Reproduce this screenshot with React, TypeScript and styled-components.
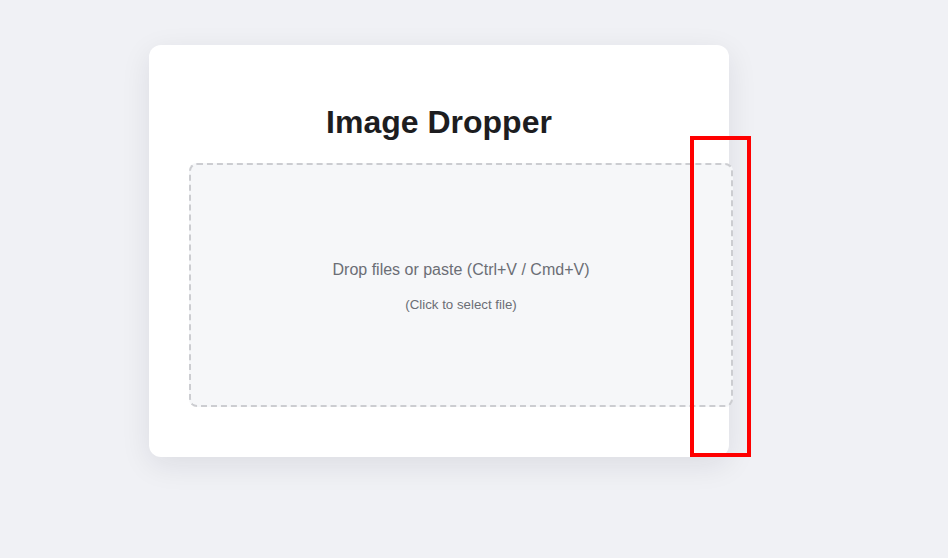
import React from "react";
import styled, { createGlobalStyle } from "styled-components";

const Global = createGlobalStyle`
  html, body { margin: 0; padding: 0; }
  body {
    background: #f0f1f5;
    font-family: "Liberation Sans", Arial, sans-serif;
    width: 948px;
    height: 558px;
    overflow: hidden;
  }
`;

const Page = styled.div`
  position: relative;
  display: flex;
  align-items: flex-start;
  padding: 45px 0 0 149px;
`;

const Card = styled.div`
  box-sizing: border-box;
  width: 580px;
  background: #ffffff;
  border-radius: 12px;
  padding: 40px 40px 50px;
  box-shadow: 0 8px 30px rgba(20, 24, 40, 0.09);
`;

const Title = styled.h1`
  margin: 19px 0 22px;
  font-size: 32px;
  line-height: 37px;
  font-weight: 700;
  color: #1d1d1f;
  text-align: center;
`;

const DropZone = styled.div`
  width: 100%;
  height: 200px;
  padding: 20px;
  border: 2px dashed #cccdd1;
  border-radius: 8px;
  background: #f6f7f9;
  display: flex;
  flex-direction: column;
  align-items: center;
  justify-content: center;
  cursor: pointer;
`;

const Primary = styled.p`
  margin: 4px 0 0;
  font-size: 16px;
  line-height: 18px;
  color: #6b6e75;
`;

const Secondary = styled.p`
  margin: 18px 0 0;
  font-size: 13.3px;
  line-height: 16px;
  color: #6b6e75;
`;

const Highlight = styled.div`
  position: absolute;
  left: 690px;
  top: 136px;
  width: 61px;
  height: 321px;
  box-sizing: border-box;
  border: 4px solid #ff0000;
  pointer-events: none;
`;

export default function App() {
  return (
    <>
      <Global />
      <Page>
        <Card>
          <Title>Image Dropper</Title>
          <DropZone>
            <Primary>Drop files or paste (Ctrl+V / Cmd+V)</Primary>
            <Secondary>(Click to select file)</Secondary>
          </DropZone>
        </Card>
        <Highlight />
      </Page>
    </>
  );
}
